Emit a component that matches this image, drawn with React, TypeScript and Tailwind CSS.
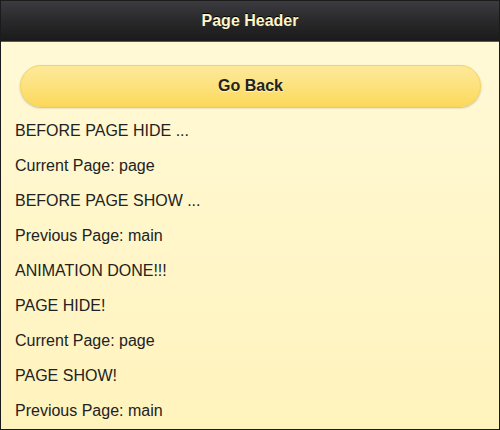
import React from 'react';

const lines = [
  'BEFORE PAGE HIDE ...',
  'Current Page: page',
  'BEFORE PAGE SHOW ...',
  'Previous Page: main',
  'ANIMATION DONE!!!',
  'PAGE HIDE!',
  'Current Page: page',
  'PAGE SHOW!',
  'Previous Page: main',
];

const App: React.FC = () => {
  return (
    <div
      className="w-[500px] h-[430px] border border-[#1b1b1b] flex flex-col overflow-hidden"
      style={{ fontFamily: '"Liberation Sans", Arial, sans-serif' }}
    >
      <header className="h-[41px] shrink-0 flex items-center justify-center bg-gradient-to-b from-[#3c3b40] via-[#29292b] to-[#1a1a1a] border-b border-[#5a5a55]">
        <h1 className="text-[16px] font-bold text-[#fff6c8] [text-shadow:0_-1px_0_#000]">Page Header</h1>
      </header>

      <main className="flex-1 bg-gradient-to-b from-[#fff9d6] to-[#fff3bd] px-[14px] pt-[23px]">
        <button className="w-[461px] ml-[5px] h-[42px] rounded-full border border-[#f5d55c] bg-gradient-to-b from-[#fde99a] to-[#fcd95a] text-[16px] font-bold text-[#222] [text-shadow:0_1px_0_#fff6c0] shadow-[0_1px_2px_rgba(0,0,0,0.25)]">
          Go Back
        </button>

        <div className="mt-[6px] flex flex-col">
          {lines.map((line, i) => (
            <p key={i} className="h-[35px] flex items-center text-[16px] text-[#222]">
              {line}
            </p>
          ))}
        </div>
      </main>
    </div>
  );
};

export default App;
